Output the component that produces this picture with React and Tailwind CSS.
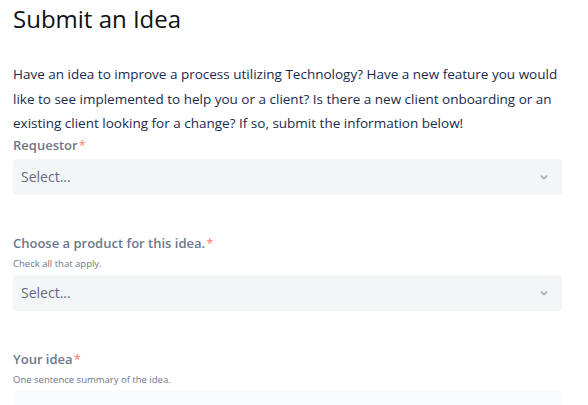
import React from 'react';

const Chevron = () => (
  <svg width="20" height="20" viewBox="0 0 24 24" className="text-[#a5adba]">
    <path d="M8.3 10.3a1 1 0 0 1 1.4 0L12 12.6l2.3-2.3a1 1 0 1 1 1.4 1.4l-3 3a1 1 0 0 1-1.4 0l-3-3a1 1 0 0 1 0-1.4z" fill="currentColor" />
  </svg>
);

const Label = ({ children }) => (
  <div className="text-[13px] font-semibold text-[#6b778c] leading-[16px]">
    {children}
    <span className="text-[#ff7a66] font-normal pl-[1px]">*</span>
  </div>
);

const SelectBox = () => (
  <div className="h-[36px] rounded-[3px] bg-[#f4f5f7] flex items-center justify-between pl-[8px] pr-[8px]">
    <span className="text-[14px] text-[#5e6c84]">Select...</span>
    <Chevron />
  </div>
);

const App = () => {
  return (
    <div className="w-[588px] h-[405px] overflow-hidden bg-white px-[13px]" style={{ fontFamily: '"Open Sans", "Noto Sans", sans-serif' }}>
      <h1 className="text-[24px] leading-[36px] text-[#111111] pt-[1px]">Submit an Idea</h1>

      <p className="mt-[25px] text-[13.5px] leading-[24.5px] text-[#172b4d]">
        Have an idea to improve a process utilizing Technology? Have a new feature you would like to see implemented to help you or a client? Is there a new client onboarding or an existing client looking for a change? If so, submit the information below!
      </p>

      <div className="mr-[13px]">
        <div className="mt-[1px]">
          <Label>Requestor</Label>
          <div className="mt-[6px]">
            <SelectBox />
          </div>
        </div>

        <div className="mt-[40px]">
          <Label>Choose a product for this idea.</Label>
          <div className="text-[9.5px] text-[#6b778c] mt-[7px] leading-[12px]">Check all that apply.</div>
          <div className="mt-[5px]">
            <SelectBox />
          </div>
        </div>

        <div className="mt-[40px]">
          <Label>Your idea</Label>
          <div className="text-[9.5px] text-[#6b778c] mt-[7px] leading-[12px]">One sentence summary of the idea.</div>
          <div className="mt-[5px] h-[36px] rounded-[3px] bg-[#fafbfc]" />
        </div>
      </div>
    </div>
  );
};

export default App;
